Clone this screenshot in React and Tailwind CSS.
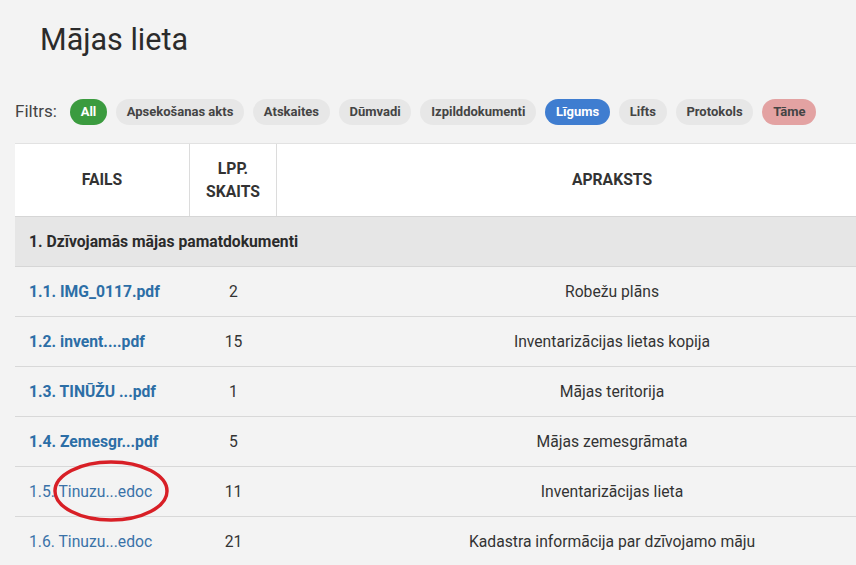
import React from 'react';

const filters = [
  { label: 'All',               cls: 'bg-[#3b9b3f] text-white' },
  { label: 'Apsekošanas akts',  cls: 'bg-[#e7e7e7] text-[#444]' },
  { label: 'Atskaites',         cls: 'bg-[#e7e7e7] text-[#444]' },
  { label: 'Dūmvadi',           cls: 'bg-[#e7e7e7] text-[#444]' },
  { label: 'Izpilddokumenti',   cls: 'bg-[#e7e7e7] text-[#444]' },
  { label: 'Līgums',            cls: 'bg-[#3f7dd0] text-white' },
  { label: 'Lifts',             cls: 'bg-[#e7e7e7] text-[#444]' },
  { label: 'Protokols',         cls: 'bg-[#e7e7e7] text-[#444]' },
  { label: 'Tāme',              cls: 'bg-[#e3a2a2] text-[#444]' },
];

const rows = [
  { file: '1.1. IMG_0117.pdf',    pages: 2,  desc: 'Robežu plāns',                          bold: true },
  { file: '1.2. invent....pdf',   pages: 15, desc: 'Inventarizācijas lietas kopija',        bold: true },
  { file: '1.3. TINŪŽU ...pdf',   pages: 1,  desc: 'Mājas teritorija',                      bold: true },
  { file: '1.4. Zemesgr...pdf',   pages: 5,  desc: 'Mājas zemesgrāmata',                    bold: true },
  { file: '1.5. Tinuzu...edoc',   pages: 11, desc: 'Inventarizācijas lieta',                bold: false, mark: true },
  { file: '1.6. Tinuzu...edoc',   pages: 21, desc: 'Kadastra informācija par dzīvojamo māju', bold: false },
];

export default function App() {
  return (
    <div
      className="w-[856px] h-[565px] overflow-hidden bg-[#f3f3f3] text-[#333]"
      style={{ fontFamily: "Roboto, 'Liberation Sans', sans-serif" }}
    >
      {/* Title */}
      <h1 className="pl-[40px] pt-[22px] text-[30.5px] leading-[36px] text-[#2b2b2b]">
        Mājas lieta
      </h1>

      {/* Filters */}
      <div className="flex items-center mt-[41px] pl-[15px] gap-[9px]">
        <span className="text-[17px] text-[#444] mr-[4px]">Filtrs:</span>
        {filters.map((f) => (
          <span
            key={f.label}
            className={`h-[26px] px-[10.75px] rounded-full flex items-center text-[13px] font-bold ${f.cls}`}
          >
            {f.label}
          </span>
        ))}
      </div>

      {/* Table */}
      <div className="ml-[15px] mt-[18px] w-[936px] text-[15.7px]">
        {/* Header */}
        <div className="grid grid-cols-[175px_87px_670px] h-[73px] bg-white border-t border-[#e2e2e2] font-bold text-[#333]">
          <div className="flex items-center justify-center border-r border-[#dcdcdc]">FAILS</div>
          <div className="flex items-center justify-center text-center leading-[23px] border-r border-[#dcdcdc]">
            LPP.<br />SKAITS
          </div>
          <div className="flex items-center justify-center">APRAKSTS</div>
        </div>

        {/* Group */}
        <div className="h-[51px] bg-[#e6e6e6] border-t border-b border-[#d6d6d6] flex items-center pl-[14px] font-bold text-[#2b2b2b]">
          1. Dzīvojamās mājas pamatdokumenti
        </div>

        {/* Rows */}
        {rows.map((r) => (
          <div
            key={r.file}
            className="grid grid-cols-[175px_87px_670px] h-[50px] border-b border-[#d8d8d8] items-center"
          >
            <div className="relative pl-[14px]">
              <span className={r.bold ? 'font-bold text-[#2c6ea6]' : 'text-[#3a72a8]'}>{r.file}</span>
              {r.mark && (
                <svg
                  className="absolute left-[37px] top-[-21px]"
                  width="118"
                  height="64"
                  viewBox="0 0 118 64"
                >
                  <ellipse cx="59" cy="32" rx="56" ry="29" fill="none" stroke="#d81f26" strokeWidth="3.5" />
                </svg>
              )}
            </div>
            <div className="text-center text-[#333]">{r.pages}</div>
            <div className="text-center text-[#333]">{r.desc}</div>
          </div>
        ))}
      </div>
    </div>
  );
}
